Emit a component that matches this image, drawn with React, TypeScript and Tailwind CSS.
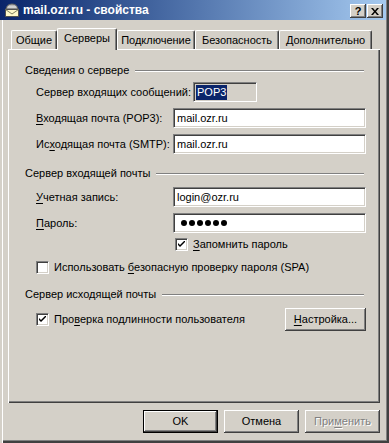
const font = "font-['Liberation_Sans',Arial,sans-serif]"

const sunken =
  "border border-t-[#808080] border-l-[#808080] border-b-white border-r-white shadow-[inset_1px_1px_0_#404040,inset_-1px_-1px_0_#d4d0c8]"

const raised =
  "shadow-[inset_-1px_-1px_0_#404040,inset_1px_1px_0_#ffffff,inset_-2px_-2px_0_#808080]"

function U({ children }: { children: string }) {
  return <span className="underline underline-offset-[2px] decoration-1">{children}</span>
}

function Checkbox({ checked }: { checked: boolean }) {
  return (
    <div className={`w-[13px] h-[13px] bg-white shrink-0 flex items-center justify-center ${sunken}`}>
      {checked && (
        <svg width="7" height="7" viewBox="0 0 7 7">
          <path d="M0 2 L0 4 L2 6 L7 1 L7 -1 L2 4 Z" fill="#000" />
        </svg>
      )}
    </div>
  )
}

function GroupHeader({ title, mt }: { title: string; mt: string }) {
  return (
    <div className={`flex items-center h-[13px] ${mt}`}>
      <span>{title}</span>
      <div className="flex-1 ml-[6px] mr-[2px] h-[2px] border-t border-t-[#808080] border-b border-b-white" />
    </div>
  )
}

function InputRow({ label, value, mt }: { label: React.ReactNode; value: string; mt: string }) {
  return (
    <div className={`flex items-center h-[20px] ${mt}`}>
      <div className="pl-[11px] w-[148px]">{label}</div>
      <div className={`flex-1 h-[20px] bg-white flex items-center pl-[3px] ${sunken}`}>{value}</div>
    </div>
  )
}

function TitleIcon() {
  return (
    <svg width="16" height="16" viewBox="0 0 16 16">
      <path d="M2 7 Q3 2 8 2 Q13 2 14 7 Z" fill="#b8b8b8" stroke="#606060" strokeWidth="1" />
      <path d="M4 5 L12 5" stroke="#e8e8e8" />
      <rect x="1.5" y="7.5" width="13" height="7" fill="#fff8c8" stroke="#505050" />
      <path d="M1.5 7.5 L8 12 L14.5 7.5" fill="none" stroke="#808060" />
    </svg>
  )
}

export default function App() {
  const tabs = [
    { name: "Общие", w: "w-[46px]" },
    { name: "Серверы", w: "w-[60px]", active: true },
    { name: "Подключение", w: "w-[78px]" },
    { name: "Безопасность", w: "w-[84px]" },
    { name: "Дополнительно", w: "w-[93px]" },
  ]

  return (
    <div
      className={`w-[389px] h-[443px] bg-[#d4d0c8] text-[11px] leading-[13px] text-black flex flex-col ${font} shadow-[inset_2px_0_0_#d4d0c8,inset_3px_0_0_#ffffff,inset_-2px_-2px_0_#404040,inset_-3px_-3px_0_#808080]`}
    >
      {/* title bar */}
      <div className="h-[20px] mr-[3px] flex items-center pl-[4px] pr-[3px] bg-gradient-to-r from-[#0a246a] to-[#a6caf0]">
        <TitleIcon />
        <span className="ml-[3px] text-white font-bold text-[12px]">mail.ozr.ru - свойства</span>
        <div className="ml-auto flex gap-[1px] pt-[2px]">
          <div className={`w-[16px] h-[14px] bg-[#d4d0c8] flex items-center justify-center font-bold text-[11px] ${raised}`}>?</div>
          <div className={`w-[16px] h-[14px] bg-[#d4d0c8] flex items-center justify-center ${raised}`}>
            <svg width="8" height="7" viewBox="0 0 8 7">
              <path d="M0 0 H2 L4 2.5 L6 0 H8 L5 3.5 L8 7 H6 L4 4.5 L2 7 H0 L3 3.5 Z" fill="#000" />
            </svg>
          </div>
        </div>
      </div>

      {/* tabs */}
      <div className="flex items-end h-[21px] mt-[8px] pl-[11px]">
        {tabs.map((t) =>
          t.active ? (
            <div
              key={t.name}
              className={`${t.w} h-[22px] -mb-[1px] relative z-10 bg-[#d4d0c8] rounded-t-[2px] border-t border-l border-white border-r border-r-[#404040] shadow-[inset_-1px_0_0_#808080] flex justify-center pt-[3px]`}
            >
              {t.name}
            </div>
          ) : (
            <div
              key={t.name}
              className={`${t.w} h-[19px] rounded-t-[2px] border-t border-l border-white border-r border-r-[#404040] shadow-[inset_-1px_0_0_#808080] flex justify-center pt-[3px]`}
            >
              {t.name}
            </div>
          )
        )}
      </div>

      {/* panel */}
      <div className="ml-[8px] w-[372px] h-[354px] border-t border-l border-white shadow-[inset_-1px_-1px_0_#404040,inset_-2px_-2px_0_#808080] pl-[16px] pr-[14px] flex flex-col">
        <GroupHeader title="Сведения о сервере" mt="mt-[14px]" />

        <div className="flex items-center h-[20px] mt-[5px]">
          <div className="pl-[11px] w-[168px]">Сервер входящих сообщений:</div>
          <div className={`w-[64px] h-[20px] flex items-center pl-[2px] ${sunken}`}>
            <span className="bg-[#0a246a] text-white px-[1px] leading-[15px]">POP3</span>
          </div>
        </div>

        <InputRow label={<><U>В</U>ходящая почта (POP3):</>} value="mail.ozr.ru" mt="mt-[6px]" />
        <InputRow label={<>Ис<U>х</U>одящая почта (SMTP):</>} value="mail.ozr.ru" mt="mt-[6px]" />

        <GroupHeader title="Сервер входящей почты" mt="mt-[13px]" />

        <InputRow label={<><U>У</U>четная запись:</>} value="login@ozr.ru" mt="mt-[7px]" />
        <InputRow
          label={<><U>П</U>ароль:</>}
          value=""
          mt="mt-[6px]"
        />
        <div className="-mt-[20px] h-[20px] ml-[152px] pl-[4px] flex items-center gap-[2px] pointer-events-none">
          {Array.from({ length: 6 }).map((_, i) => (
            <span key={i} className="w-[6px] h-[6px] rounded-full bg-black" />
          ))}
        </div>

        <div className="flex items-center h-[13px] mt-[5px] pl-[150px] gap-[5px]">
          <Checkbox checked />
          <span><U>З</U>апомнить пароль</span>
        </div>

        <div className="flex items-center h-[13px] mt-[10px] pl-[11px] gap-[5px]">
          <Checkbox checked={false} />
          <span>Использовать <U>б</U>езопасную проверку пароля (SPA)</span>
        </div>

        <GroupHeader title="Сервер исходящей почты" mt="mt-[14px]" />

        <div className="flex items-center h-[23px] mt-[7px] pl-[11px]">
          <Checkbox checked />
          <span className="ml-[5px]">Про<U>в</U>ерка подлинности пользователя</span>
          <div className={`ml-auto w-[81px] h-[23px] flex items-center justify-center ${raised}`}>
            <span><U>Н</U>астройка...</span>
          </div>
        </div>
      </div>

      {/* buttons */}
      <div className="flex justify-end gap-[6px] mt-[7px] pr-[9px]">
        <div className="w-[75px] h-[23px] border border-black flex items-center justify-center shadow-[inset_-1px_-1px_0_#404040,inset_1px_1px_0_#ffffff,inset_-2px_-2px_0_#808080]">
          OK
        </div>
        <div className={`w-[75px] h-[23px] flex items-center justify-center ${raised}`}>Отмена</div>
        <div className={`w-[75px] h-[23px] flex items-center justify-center text-[#808080] [text-shadow:1px_1px_0_#ffffff] ${raised}`}>
          При<U>м</U>енить
        </div>
      </div>
    </div>
  )
}
